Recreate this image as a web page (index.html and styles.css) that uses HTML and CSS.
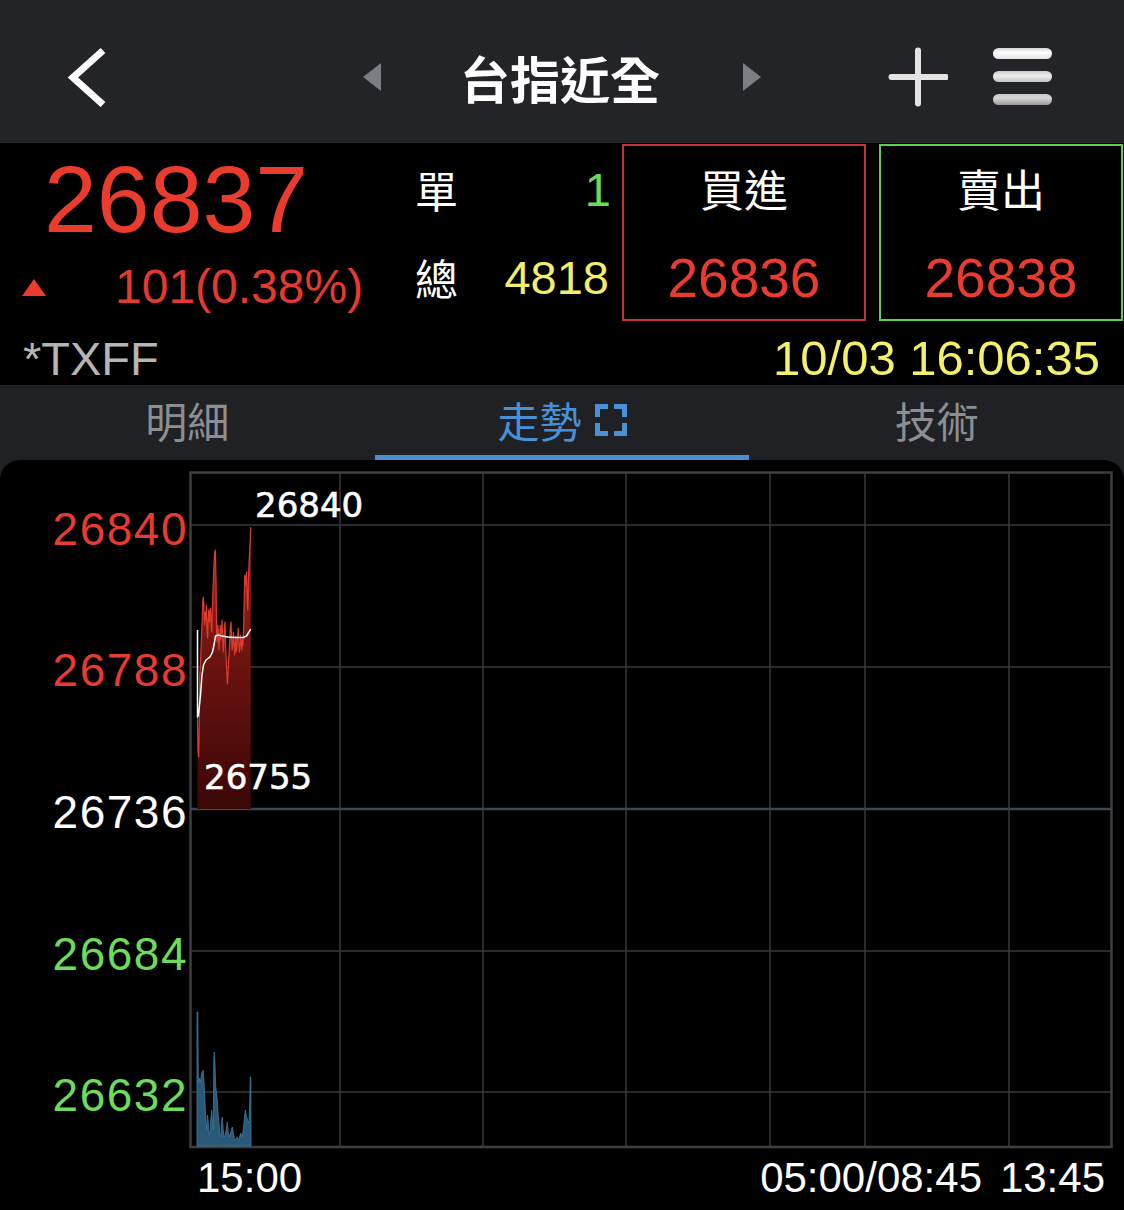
FILE: index.html
```html
<!DOCTYPE html>
<html lang="zh-Hant">
<head>
<meta charset="utf-8">
<title>台指近全</title>
<link rel="stylesheet" href="styles.css">
</head>
<body>
<div class="app">
  <header class="topbar">
    <svg class="ic-back" viewBox="0 0 40 60"><polyline points="35,3.5 5,30.5 35,57.5"/></svg>
    <svg class="ic-tri left" viewBox="0 0 20 30"><polygon points="18,1 0,15 18,29"/></svg>
    <h1 class="title cjk">台指近全</h1>
    <svg class="ic-tri right" viewBox="0 0 20 30"><polygon points="0,1 18,15 0,29"/></svg>
    <svg class="ic-plus" viewBox="0 0 60 60"><path d="M30,3.5 V56.5 M3.5,30 H58"/></svg>
    <div class="ic-menu"><span class="b1"></span><span class="b2"></span><span class="b3"></span></div>
  </header>

  <section class="quote">
    <div class="quote-top">
      <div class="last">
        <div class="last-price">26837</div>
        <div class="change"><span class="up-tri"></span><span class="chg">101(0.38%)</span></div>
      </div>
      <div class="vol">
        <div class="vol-row"><span class="vol-label cjk">單</span><span class="vol-val green single">1</span></div>
        <div class="vol-row"><span class="vol-label cjk">總</span><span class="vol-val yellow total">4818</span></div>
      </div>
      <div class="order buy">
        <div class="order-label cjk">買進</div>
        <div class="order-price">26836</div>
      </div>
      <div class="order sell">
        <div class="order-label cjk">賣出</div>
        <div class="order-price">26838</div>
      </div>
    </div>
    <div class="quote-bottom">
      <span class="symbol">*TXFF</span>
      <span class="time">10/03 16:06:35</span>
    </div>
  </section>

  <div class="tabs-wrap">
    <nav class="tabs">
      <div class="tab cjk">明細</div>
      <div class="tab active cjk">走勢<svg class="ic-expand" viewBox="0 0 32 32"><path d="M2.5,13 V2.5 H13 M19,2.5 H29.5 V13 M29.5,19 V29.5 H19 M13,29.5 H2.5 V19"/></svg></div>
      <div class="tab cjk">技術</div>
    </nav>
    <div class="chart-panel">
      <svg class="chart" viewBox="0 0 1124 750">
        <defs>
          <linearGradient id="redfill" x1="0" y1="67" x2="0" y2="349" gradientUnits="userSpaceOnUse">
            <stop offset="0" stop-color="#b1241b"/>
            <stop offset="0.45" stop-color="#6e1410"/>
            <stop offset="1" stop-color="#3a0707"/>
          </linearGradient>
        </defs>
        <g class="grid">
          <line x1="340" y1="12" x2="340" y2="687"/>
          <line x1="483" y1="12" x2="483" y2="687"/>
          <line x1="626" y1="12" x2="626" y2="687"/>
          <line x1="770" y1="12" x2="770" y2="687"/>
          <line x1="865" y1="12" x2="865" y2="687"/>
          <line x1="1009" y1="12" x2="1009" y2="687"/>
          <line x1="190" y1="65" x2="1112" y2="65"/>
          <line x1="190" y1="207" x2="1112" y2="207"/>
          <line x1="190" y1="491" x2="1112" y2="491"/>
          <line x1="190" y1="632" x2="1112" y2="632"/>
        </g>
        <rect class="frame" x="190.5" y="12.5" width="921" height="674.5"/>
        <line class="midline" x1="190" y1="349" x2="1112" y2="349"/>

        <polygon class="pfill" points="197.5,257 198,290 198.7,297 199.3,262 199.8,215 200.4,205 201,190 201.6,172 202.2,160 202.8,140 203.4,137 204,150 204.6,165 205.2,152 205.8,160 206.4,145 207,170 207.6,178 208.2,158 208.8,150 209.4,162 210,152 210.6,148 211.2,165 211.8,172 212.4,150 213,130 213.6,115 214.2,100 214.8,92 215.4,90 216,120 216.6,175 217.2,182 217.8,165 218.4,172 219,190 219.6,178 220.2,165 220.8,180 221.4,170 222,160 222.6,175 223.2,192 223.8,185 224.4,168 225,162 225.6,185 226.2,200 226.8,212 227.4,224 228,215 228.6,200 229.2,190 229.8,180 230.4,165 231,162 231.6,178 232.2,190 232.8,183 233.4,172 234,180 234.6,195 235.2,188 235.8,176 236.4,192 237,185 237.6,178 238.2,168 238.8,182 239.4,192 240,186 240.6,175 241.2,184 241.8,190 242.4,178 243,186 243.6,168 244.2,140 244.8,115 245.4,118 246,125 246.6,112 247.2,140 247.8,150 248.4,120 249,105 249.6,92 250.2,80 250.7,67 250.7,349 197.5,349"/>
        <polyline class="pline" points="197.5,257 198,290 198.7,297 199.3,262 199.8,215 200.4,205 201,190 201.6,172 202.2,160 202.8,140 203.4,137 204,150 204.6,165 205.2,152 205.8,160 206.4,145 207,170 207.6,178 208.2,158 208.8,150 209.4,162 210,152 210.6,148 211.2,165 211.8,172 212.4,150 213,130 213.6,115 214.2,100 214.8,92 215.4,90 216,120 216.6,175 217.2,182 217.8,165 218.4,172 219,190 219.6,178 220.2,165 220.8,180 221.4,170 222,160 222.6,175 223.2,192 223.8,185 224.4,168 225,162 225.6,185 226.2,200 226.8,212 227.4,224 228,215 228.6,200 229.2,190 229.8,180 230.4,165 231,162 231.6,178 232.2,190 232.8,183 233.4,172 234,180 234.6,195 235.2,188 235.8,176 236.4,192 237,185 237.6,178 238.2,168 238.8,182 239.4,192 240,186 240.6,175 241.2,184 241.8,190 242.4,178 243,186 243.6,168 244.2,140 244.8,115 245.4,118 246,125 246.6,112 247.2,140 247.8,150 248.4,120 249,105 249.6,92 250.2,80 250.7,67"/>
        <polyline class="avg" points="197.5,170 197.5,257 198.5,255 200.5,235 202,215 203.5,205 206,200 210,197 212.5,192 214,185 215.5,176 218,175 222,176 228,177 235,177.5 243,177.5 246.5,176 249,172 250.7,169"/>

        <polygon class="vfill" points="197,686 197,552 197.8,552 198.3,623 199.5,618 200.5,622 201.7,613 202.5,612 203.3,610 204.2,625 205,643 205.8,660 206.7,670 207.5,655 208.3,663 209.2,675 210,673 210.8,660 211.7,650 212.5,662 213.3,670 213.8,600 214.3,592 214.8,600 215.7,627 216.5,633 217.3,640 218.2,655 219,663 219.8,675 220.7,677 221.5,665 222.3,657 223.2,670 224,677 224.8,676 225.7,673 226.5,668 227.3,662 228.2,672 229,677 229.8,675 230.7,673 231.5,670 232.3,667 233.2,672 234,677 234.8,679 235.7,680 236.5,678 237.3,677 238.2,679 239,680 239.8,676 240.7,673 241.5,675 242.3,677 243.2,670 244,663 244.7,655 245.3,650 246,654 246.7,657 247.5,660 248.3,663 249,661 249.8,640 250.3,617 250.8,617 251,686"/>

        <text class="ax red" x="188" y="85">26840</text>
        <text class="ax red" x="188" y="226">26788</text>
        <text class="ax white" x="188" y="368">26736</text>
        <text class="ax green" x="188" y="510">26684</text>
        <text class="ax green" x="188" y="651">26632</text>

        <text class="hl" x="255" y="57">26840</text>
        <text class="hl" x="204" y="329">26755</text>

        <text class="xt" x="197" y="732">15:00</text>
        <text class="xt end" x="982" y="732">05:00/08:45</text>
        <text class="xt end" x="1105" y="732">13:45</text>
      </svg>
    </div>
  </div>
</div>
</body>
</html>
```

FILE: styles.css
```css
* { box-sizing: border-box; margin: 0; padding: 0; }

html, body {
  width: 1124px;
  height: 1210px;
  overflow: hidden;
  background: #000;
}

body {
  font-family: "Liberation Sans", Arial, "Noto Sans CJK TC", sans-serif;
  color: #fff;
}

.cjk {
  font-family: "Noto Sans CJK TC", "Noto Sans CJK SC", sans-serif;
}

/* ---------- top bar ---------- */
.topbar {
  height: 143px;
  background: #232428;
  display: flex;
  align-items: center;
  padding-top: 10px;
}

.ic-back {
  width: 40px;
  height: 60px;
  margin-left: 68px;
  fill: none;
  stroke: #ffffff;
  stroke-width: 7;
  stroke-linejoin: miter;
}

.ic-tri {
  width: 20px;
  height: 30px;
  fill: #7b7e83;
}
.ic-tri.left { margin-left: 255px; }
.ic-tri.right { margin-left: 6px; }

.title {
  width: 354px;
  text-align: center;
  font-size: 50px;
  font-weight: 700;
  line-height: 1;
  color: #ffffff;
}

.ic-plus {
  width: 60px;
  height: 60px;
  margin-left: 125px;
  fill: none;
  stroke: #e3e3e3;
  stroke-width: 6;
  stroke-linecap: round;
}

.ic-menu {
  margin-left: 45px;
  width: 59px;
  display: flex;
  flex-direction: column;
  gap: 12px;
}
.ic-menu span {
  display: block;
  height: 11px;
  border-radius: 6px;
}
.ic-menu .b1 { background: linear-gradient(#d4d4d4, #ffffff 40%, #e4e4e4); }
.ic-menu .b2 { background: linear-gradient(#cdcdcd, #ececec 45%, #c4c4c4); }
.ic-menu .b3 { background: linear-gradient(#c6c6c6, #d6d6d6 35%, #9a9a9a); }

/* ---------- quote ---------- */
.quote {
  background: #000;
  height: 242px;
}

.quote-top {
  display: flex;
  height: 178px;
  padding-top: 1px;
}

.last {
  width: 415px;
  padding-top: 8px;
}

.last-price {
  font-size: 95px;
  line-height: 95px;
  color: #ea3b2f;
  padding-left: 44px;
}

.change {
  display: flex;
  align-items: flex-start;
  margin-top: 16px;
}

.up-tri {
  width: 0;
  height: 0;
  margin: 16px 0 0 22px;
  border-left: 12px solid transparent;
  border-right: 12px solid transparent;
  border-bottom: 17px solid #ea3b2f;
}

.chg {
  margin-left: 69px;
  font-size: 48px;
  line-height: 48px;
  color: #e33a2f;
}

.vol {
  width: 200px;
  padding-top: 2px;
  display: flex;
  flex-direction: column;
}

.vol-row {
  height: 88px;
  display: flex;
  align-items: center;
  justify-content: space-between;
}

.vol-label {
  font-size: 43px;
  line-height: 1;
  color: #ffffff;
}

.vol-val {
  font-size: 47px;
  line-height: 1;
}
.vol-val.single { margin-right: 4px; }
.vol-val.total { margin-right: 6px; }

.green { color: #6bdc55; }
.yellow { color: #f0ee6a; }

.order {
  width: 244px;
  height: 177px;
  border: 2px solid;
  display: flex;
  flex-direction: column;
  align-items: center;
}
.order.buy { margin-left: 7px; border-color: #c3362c; }
.order.sell { margin-left: 13px; border-color: #5ccf4b; }

.order-label {
  margin-top: 20px;
  font-size: 44px;
  line-height: 1;
  color: #ffffff;
}

.order-price {
  margin-top: 41px;
  font-size: 55px;
  line-height: 55px;
  color: #ea3b2f;
}

.quote-bottom {
  height: 64px;
  display: flex;
  justify-content: space-between;
  align-items: center;
  padding: 10px 24px 0 23px;
}

.symbol {
  font-size: 47px;
  line-height: 1;
  color: #b5b5b5;
}

.time {
  font-size: 49px;
  line-height: 1;
  color: #f3f06c;
}

/* ---------- tabs ---------- */
.tabs-wrap {
  background: #1f2125;
}

.tabs {
  display: flex;
  height: 75px;
}

.tab {
  flex: 1;
  display: flex;
  align-items: center;
  justify-content: center;
  gap: 13px;
  font-size: 42px;
  line-height: 1;
  color: #8c8e92;
  border-bottom: 5px solid transparent;
}

.tab.active {
  color: #4a90d6;
  border-bottom-color: #4a8fd2;
}

.ic-expand {
  width: 32px;
  height: 32px;
  fill: none;
  stroke: #4a90d6;
  stroke-width: 5;
}

/* ---------- chart ---------- */
.chart-panel {
  height: 750px;
  background: #000;
  border-radius: 20px 20px 0 0;
  overflow: hidden;
}

.chart {
  display: block;
  width: 1124px;
  height: 750px;
}

.grid line {
  stroke: #38393c;
  stroke-width: 1.5;
}

.frame {
  fill: none;
  stroke: #3d3e41;
  stroke-width: 2.5;
}

.midline {
  stroke: #3a4652;
  stroke-width: 2.5;
}

.pfill { fill: url(#redfill); }
.pline {
  fill: none;
  stroke: #dc3b30;
  stroke-width: 1.2;
  stroke-linejoin: round;
}
.avg {
  fill: none;
  stroke: #ffffff;
  stroke-width: 1.5;
  stroke-linejoin: round;
}
.vfill {
  fill: #2a5877;
  stroke: #3e7aa0;
  stroke-width: 0.8;
}

.ax {
  font-family: "Liberation Sans", Arial, sans-serif;
  font-size: 46px;
  letter-spacing: 1.5px;
  text-anchor: end;
}
.ax.red { fill: #e53b30; }
.ax.white { fill: #ffffff; }
.ax.green { fill: #6cdc5a; }

.hl {
  font-family: "DejaVu Sans", sans-serif;
  font-size: 34px;
  fill: #ffffff;
  stroke: #ffffff;
  stroke-width: 0.6;
}

.xt {
  font-family: "Liberation Sans", Arial, sans-serif;
  font-size: 42px;
  fill: #ffffff;
}
.xt.end { text-anchor: end; }
```
